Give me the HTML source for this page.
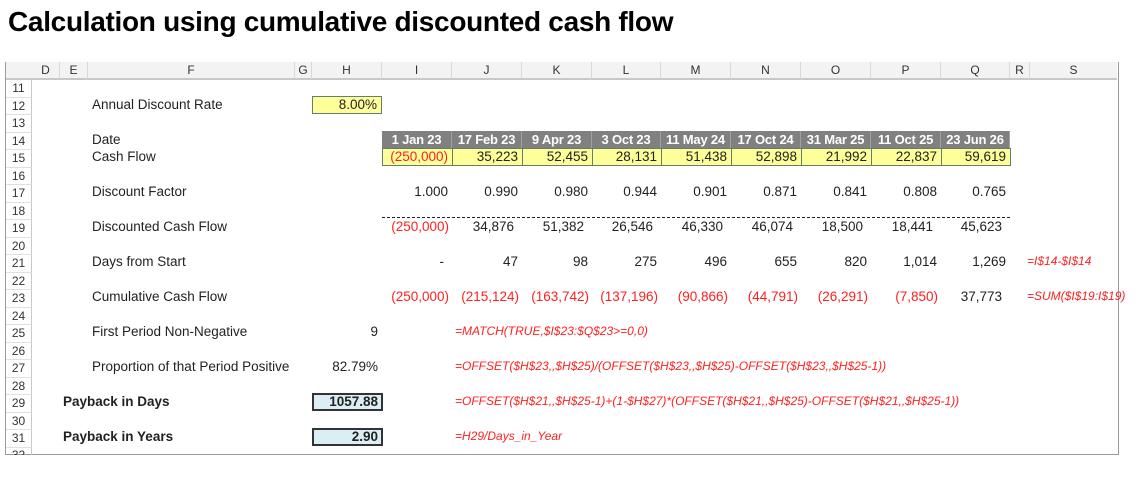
<!DOCTYPE html>
<html><head><meta charset="utf-8"><style>
body{margin:0;width:1141px;height:487px;background:#fff;position:relative;overflow:hidden;font-family:"Liberation Sans",Arial,sans-serif;}
.t{position:absolute;left:8px;top:6px;font-size:28px;font-weight:bold;color:#000;letter-spacing:-0.3px}
.frame{position:absolute;left:5px;top:62px;width:1112px;height:392px;border:1px solid #9a9a9a;border-top:none;overflow:hidden}
.ch{position:absolute;top:62px;height:16px;background:#f3f3f3;border-bottom:2px solid #c8c8c8;border-right:1px solid #d8d8d8;font-size:12px;color:#333;text-align:center;line-height:16px;box-sizing:content-box}
.rh{position:absolute;left:6px;width:26px;height:17.5px;border-bottom:1px solid #e0e0e0;border-right:1px solid #c8c8c8;font-size:12px;color:#333;text-align:center;line-height:17px;box-sizing:border-box;overflow:hidden}
.c{position:absolute;height:17px;line-height:17px;font-size:13.5px;color:#222;white-space:nowrap;box-sizing:border-box}
.r{text-align:right;padding-right:4px}
.red{color:#ff2020}
.f{position:absolute;font-size:12px;font-style:italic;color:#ff2020;white-space:nowrap;line-height:17px}
.hd{background:#808080;color:#fff;font-weight:bold;text-align:center;border-right:1px solid #a0a0a0;font-size:13px;letter-spacing:-0.2px}
.yl{background:#ffff99;border:1px solid #5f7f6f}
.bl{background:#daeef3;border:2px solid #333;font-weight:bold}
.b{font-weight:bold}
</style></head><body>
<div class="t">Calculation using cumulative discounted cash flow</div>
<div class="frame"></div>
<div class="ch" style="left:6px;width:26px"></div>
<div class="ch" style="left:32px;width:27px">D</div>
<div class="ch" style="left:60px;width:27px">E</div>
<div class="ch" style="left:88px;width:206px">F</div>
<div class="ch" style="left:295px;width:16px">G</div>
<div class="ch" style="left:312px;width:69px">H</div>
<div class="ch" style="left:382px;width:69px">I</div>
<div class="ch" style="left:452px;width:69px">J</div>
<div class="ch" style="left:522px;width:69px">K</div>
<div class="ch" style="left:592px;width:68px">L</div>
<div class="ch" style="left:661px;width:69px">M</div>
<div class="ch" style="left:731px;width:69px">N</div>
<div class="ch" style="left:801px;width:69px">O</div>
<div class="ch" style="left:871px;width:69px">P</div>
<div class="ch" style="left:941px;width:68px">Q</div>
<div class="ch" style="left:1010px;width:19px">R</div>
<div class="ch" style="left:1030px;width:87px;border-right:none">S</div>

<div class="rh" style="top:80px">11</div><div class="rh" style="top:97.5px">12</div><div class="rh" style="top:115px">13</div><div class="rh" style="top:132.5px">14</div><div class="rh" style="top:150px">15</div><div class="rh" style="top:167.5px">16</div><div class="rh" style="top:185px">17</div><div class="rh" style="top:202.5px">18</div><div class="rh" style="top:220px">19</div><div class="rh" style="top:237.5px">20</div><div class="rh" style="top:255px">21</div><div class="rh" style="top:272.5px">22</div><div class="rh" style="top:290px">23</div><div class="rh" style="top:307.5px">24</div><div class="rh" style="top:325px">25</div><div class="rh" style="top:342.5px">26</div><div class="rh" style="top:360px">27</div><div class="rh" style="top:377.5px">28</div><div class="rh" style="top:395px">29</div><div class="rh" style="top:412.5px">30</div><div class="rh" style="top:430px">31</div><div class="rh" style="top:447.5px;height:7px;border-bottom:none;line-height:14px">32</div>

<div class="c" style="left:92px;top:96px">Annual Discount Rate</div>
<div class="c r yl" style="left:312px;top:96px;width:70px;height:18px;line-height:16px">8.00%</div>
<div class="c" style="left:92px;top:131px">Date</div>
<div class="c" style="left:92px;top:148px">Cash Flow</div>

<div class="c hd" style="left:382px;top:131px;width:70px">1 Jan 23</div>
<div class="c hd" style="left:452px;top:131px;width:70px">17 Feb 23</div>
<div class="c hd" style="left:522px;top:131px;width:70px">9 Apr 23</div>
<div class="c hd" style="left:592px;top:131px;width:69px">3 Oct 23</div>
<div class="c hd" style="left:661px;top:131px;width:70px">11 May 24</div>
<div class="c hd" style="left:731px;top:131px;width:70px">17 Oct 24</div>
<div class="c hd" style="left:801px;top:131px;width:70px">31 Mar 25</div>
<div class="c hd" style="left:871px;top:131px;width:70px">11 Oct 25</div>
<div class="c hd" style="left:941px;top:131px;width:69px">23 Jun 26</div>

<div class="c r yl red" style="left:382px;top:148px;width:71px;height:18px;line-height:16px">(250,000)</div>
<div class="c r yl" style="left:452px;top:148px;width:71px;height:18px;line-height:16px">35,223</div>
<div class="c r yl" style="left:522px;top:148px;width:71px;height:18px;line-height:16px">52,455</div>
<div class="c r yl" style="left:592px;top:148px;width:70px;height:18px;line-height:16px">28,131</div>
<div class="c r yl" style="left:661px;top:148px;width:71px;height:18px;line-height:16px">51,438</div>
<div class="c r yl" style="left:731px;top:148px;width:71px;height:18px;line-height:16px">52,898</div>
<div class="c r yl" style="left:801px;top:148px;width:71px;height:18px;line-height:16px">21,992</div>
<div class="c r yl" style="left:871px;top:148px;width:71px;height:18px;line-height:16px">22,837</div>
<div class="c r yl" style="left:941px;top:148px;width:70px;height:18px;line-height:16px">59,619</div>

<div class="c" style="left:92px;top:183px">Discount Factor</div>
<div class="c r" style="left:382px;top:183px;width:70px">1.000</div>
<div class="c r" style="left:452px;top:183px;width:70px">0.990</div>
<div class="c r" style="left:522px;top:183px;width:70px">0.980</div>
<div class="c r" style="left:592px;top:183px;width:69px">0.944</div>
<div class="c r" style="left:661px;top:183px;width:70px">0.901</div>
<div class="c r" style="left:731px;top:183px;width:70px">0.871</div>
<div class="c r" style="left:801px;top:183px;width:70px">0.841</div>
<div class="c r" style="left:871px;top:183px;width:70px">0.808</div>
<div class="c r" style="left:941px;top:183px;width:69px">0.765</div>

<div style="position:absolute;left:382px;top:217px;width:628px;border-top:1px dashed #222"></div>
<div class="c" style="left:92px;top:218px">Discounted Cash Flow</div>
<div class="c r red" style="left:382px;top:218px;width:70px;padding-right:3px">(250,000)</div>
<div class="c r" style="left:452px;top:218px;width:70px;padding-right:8px">34,876</div>
<div class="c r" style="left:522px;top:218px;width:70px;padding-right:8px">51,382</div>
<div class="c r" style="left:592px;top:218px;width:69px;padding-right:8px">26,546</div>
<div class="c r" style="left:661px;top:218px;width:70px;padding-right:8px">46,330</div>
<div class="c r" style="left:731px;top:218px;width:70px;padding-right:8px">46,074</div>
<div class="c r" style="left:801px;top:218px;width:70px;padding-right:8px">18,500</div>
<div class="c r" style="left:871px;top:218px;width:70px;padding-right:8px">18,441</div>
<div class="c r" style="left:941px;top:218px;width:69px;padding-right:8px">45,623</div>

<div class="c" style="left:92px;top:253px">Days from Start</div>
<div class="c r" style="left:382px;top:253px;width:70px;padding-right:8px">-</div>
<div class="c r" style="left:452px;top:253px;width:70px">47</div>
<div class="c r" style="left:522px;top:253px;width:70px">98</div>
<div class="c r" style="left:592px;top:253px;width:69px">275</div>
<div class="c r" style="left:661px;top:253px;width:70px">496</div>
<div class="c r" style="left:731px;top:253px;width:70px">655</div>
<div class="c r" style="left:801px;top:253px;width:70px">820</div>
<div class="c r" style="left:871px;top:253px;width:70px">1,014</div>
<div class="c r" style="left:941px;top:253px;width:69px">1,269</div>
<div class="f" style="left:1027px;top:253px">=I$14-$I$14</div>

<div class="c" style="left:92px;top:288px">Cumulative Cash Flow</div>
<div class="c r red" style="left:382px;top:288px;width:70px;padding-right:3px">(250,000)</div>
<div class="c r red" style="left:452px;top:288px;width:70px;padding-right:3px">(215,124)</div>
<div class="c r red" style="left:522px;top:288px;width:70px;padding-right:3px">(163,742)</div>
<div class="c r red" style="left:592px;top:288px;width:69px;padding-right:3px">(137,196)</div>
<div class="c r red" style="left:661px;top:288px;width:70px;padding-right:3px">(90,866)</div>
<div class="c r red" style="left:731px;top:288px;width:70px;padding-right:3px">(44,791)</div>
<div class="c r red" style="left:801px;top:288px;width:70px;padding-right:3px">(26,291)</div>
<div class="c r red" style="left:871px;top:288px;width:70px;padding-right:3px">(7,850)</div>
<div class="c r" style="left:941px;top:288px;width:69px;padding-right:8px">37,773</div>
<div class="f" style="left:1027px;top:288px">=SUM($I$19:I$19)</div>

<div class="c" style="left:92px;top:323px">First Period Non-Negative</div>
<div class="c r" style="left:312px;top:323px;width:70px">9</div>
<div class="f" style="left:455px;top:323px">=MATCH(TRUE,$I$23:$Q$23&gt;=0,0)</div>

<div class="c" style="left:92px;top:358px">Proportion of that Period Positive</div>
<div class="c r" style="left:312px;top:358px;width:70px">82.79%</div>
<div class="f" style="left:455px;top:358px">=OFFSET($H$23,,$H$25)/(OFFSET($H$23,,$H$25)-OFFSET($H$23,,$H$25-1))</div>

<div class="c b" style="left:63px;top:393px">Payback in Days</div>
<div class="c r bl" style="left:312px;top:393px;width:71px;height:18px;line-height:14px;padding-right:3px">1057.88</div>
<div class="f" style="left:455px;top:393px">=OFFSET($H$21,,$H$25-1)+(1-$H$27)*(OFFSET($H$21,,$H$25)-OFFSET($H$21,,$H$25-1))</div>

<div class="c b" style="left:63px;top:428px">Payback in Years</div>
<div class="c r bl" style="left:312px;top:428px;width:71px;height:18px;line-height:14px;padding-right:3px">2.90</div>
<div class="f" style="left:455px;top:428px">=H29/Days_in_Year</div>
</body></html>
